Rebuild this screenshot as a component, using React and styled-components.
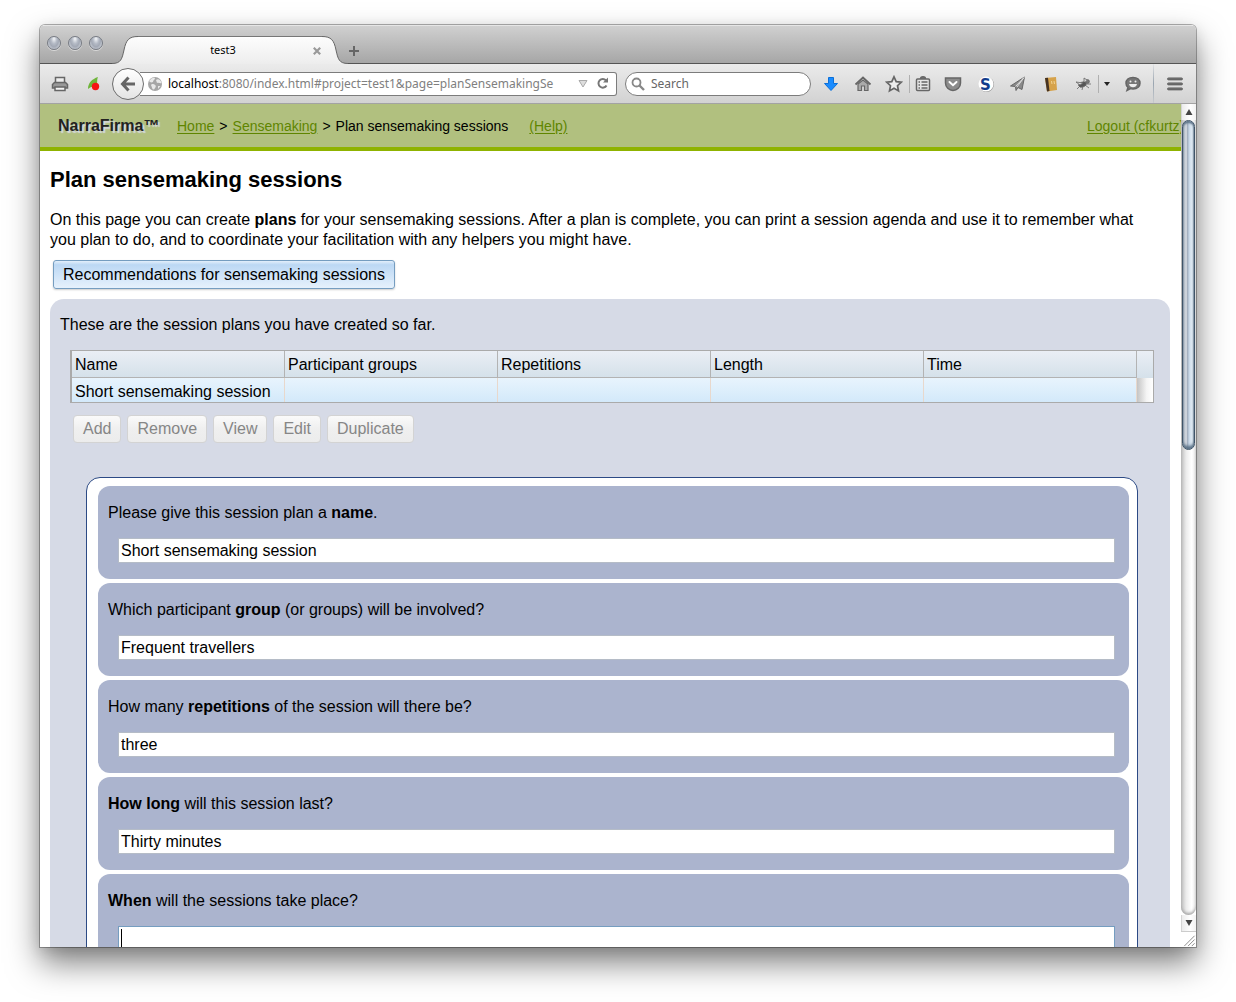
import React from "react";
import styled, { createGlobalStyle } from "styled-components";

const GlobalStyle = createGlobalStyle`
  *, *::before, *::after { box-sizing: border-box; }
  body {
    margin: 0;
    background: #fff;
    color: #000;
    font: 16px/20px "Liberation Sans", Arial, sans-serif;
    overflow: hidden;
  }
  button, input, textarea { font: inherit; color: inherit; margin: 0; }
`;

const chromeFont = `"Noto Sans", "Open Sans", sans-serif`;

const Desktop = styled.div`
  height: 100vh;
  padding: 25px 40px 55px;
`;

const BrowserWindow = styled.div`
  display: flex;
  flex-direction: column;
  height: 100%;
  border-radius: 5px 5px 0 0;
  overflow: hidden;
  background: #fff;
  box-shadow: 0 0 0 1px rgba(0, 0, 0, 0.3), 0 16px 32px rgba(0, 0, 0, 0.5),
    0 4px 14px rgba(0, 0, 0, 0.1);
`;

const TitleBar = styled.div`
  display: flex;
  align-items: flex-end;
  flex: none;
  height: 39px;
  border-top: 1px solid #e6e6e6;
  background: linear-gradient(#d0d0d0, #a5a5a5);
  box-shadow: inset 0 -1px #555;
`;

const Lights = styled.div`
  display: flex;
  align-self: flex-start;
  gap: 7px;
  width: 72px;
  padding: 10px 0 0 7px;
`;

const Light = styled.button`
  width: 14px;
  height: 14px;
  padding: 0;
  border: 1px solid #777b83;
  border-radius: 50%;
  background: radial-gradient(ellipse at 50% 15%, #f4f6f9 0, #b4bac5 35%, #a3a9b5 55%, #e2e6ec 100%);
  box-shadow: 0 1px 0 #d8d8d8;
`;

const TabEdge = styled.svg`
  display: block;
  width: 26px;
  height: 28px;
`;

const TabBody = styled.div`
  display: flex;
  align-items: center;
  width: 184px;
  height: 28px;
  border-top: 1px solid #777;
  background: linear-gradient(#fdfdfd, #ededed);
  box-shadow: inset 0 1px #fff;
`;

const TabTitle = styled.span`
  flex: 1;
  padding: 0 4px 2px 0;
  text-align: center;
  font: 11px/14px ${chromeFont};
`;

const PlainButton = styled.button`
  display: flex;
  align-items: center;
  justify-content: center;
  flex: none;
  width: ${(p) => p.$w}px;
  height: ${(p) => p.$h || 24}px;
  padding: 0;
  border: 0;
  background: none;
`;

const Toolbar = styled.div`
  display: flex;
  align-items: center;
  flex: none;
  height: 40px;
  border-bottom: 1px solid #a3a3a3;
  background: linear-gradient(#ebebeb, #d2d2d2);
`;

const Spacer = styled.span`
  flex: none;
  width: ${(p) => p.$w}px;
`;

const BackButton = styled.button`
  display: flex;
  align-items: center;
  justify-content: center;
  flex: none;
  position: relative;
  width: 32px;
  height: 32px;
  padding: 0;
  border: 1px solid #6d6d6d;
  border-radius: 50%;
  background: linear-gradient(#fff, #e4e4e4);
`;

const UrlBox = styled.div`
  display: flex;
  align-items: center;
  flex: 1;
  min-width: 0;
  height: 24px;
  margin-left: -4px;
  padding-left: 7px;
  border: 1px solid #7c7c7c;
  border-left: 0;
  border-radius: 0 3px 3px 0;
  background: #fff;
  font: 12px/16px ${chromeFont};
`;

const UrlHost = styled.label`
  padding-left: 5px;
`;

const UrlInput = styled.input`
  flex: 1;
  min-width: 0;
  height: 16px;
  padding: 0;
  border: 0;
  outline: 0;
  background: none;
  color: #808080;
`;

const SearchBox = styled.label`
  display: flex;
  align-items: center;
  gap: 6px;
  flex: none;
  width: 186px;
  height: 24px;
  margin: 0 4px 0 8px;
  padding: 0 12px 0 5px;
  border: 1px solid #7c7c7c;
  border-radius: 12px;
  background: #fff;
  font: 12px/16px ${chromeFont};
`;

const SearchInput = styled.input`
  flex: 1;
  min-width: 0;
  padding: 0;
  border: 0;
  outline: 0;
  background: none;
  &::placeholder { color: #666; opacity: 1; }
`;

const Divider = styled.span`
  flex: none;
  width: 1px;
  height: 18px;
  background: #b0b0b0;
`;

const TallDivider = styled(Divider)`
  height: 39px;
  margin: 0 0 0 2px;
  background: linear-gradient(rgba(150, 165, 180, 0.1), #9aa5b0 50%, rgba(150, 165, 180, 0.2));
`;

const Viewport = styled.div`
  display: flex;
  flex: 1;
  min-height: 0;
`;

const Page = styled.div`
  flex: 1;
  min-width: 0;
  overflow: hidden;
`;

const Header = styled.header`
  display: flex;
  align-items: center;
  height: 47px;
  padding-left: 18px;
  border-bottom: 4px solid #8fb300;
  background: #b1c07f;
  white-space: nowrap;
`;

const Brand = styled.strong`
  width: 119px;
  color: #222;
  text-shadow: 2px 2px 1px #d4d7dd;
`;

const Crumbs = styled.nav`
  display: flex;
  gap: 5px;
  flex: 1;
  font-size: 14px;
`;

const GreenLink = styled.a`
  color: #5f8500;
  text-decoration: underline;
  text-underline-offset: 2px;
`;

const HelpLink = styled(GreenLink)`
  margin-left: 16px;
`;

const Logout = styled.div`
  width: 94px;
  font-size: 14px;
`;

const Main = styled.main`
  padding: 16px 11px 0 10px;
`;

const Title = styled.h1`
  margin: 0 0 17px;
  font-size: 22px;
  line-height: 26px;
`;

const Intro = styled.p`
  margin: 0 0 10px;
  padding-right: 20px;
`;

const PrimaryButton = styled.button`
  height: 29px;
  margin-left: 3px;
  padding: 0 9px;
  border: 1px solid #759dc0;
  border-radius: 3px;
  background: linear-gradient(#e3effb 0, #bcd8f4 14%, #e6f1fc 100%);
  box-shadow: 0 1px 2px rgba(0, 0, 0, 0.2);
`;

const Panel = styled.section`
  margin-top: 10px;
  padding: 16px 16px 0 10px;
  border-radius: 14px;
  background: #d6dae6;
`;

const PanelText = styled.p`
  margin: 0;
`;

const Grid = styled.table`
  width: calc(100% - 10px);
  margin: 15px 0 12px 10px;
  border: 1px solid #aaa;
  border-left-width: 2px;
  border-spacing: 0;
  table-layout: fixed;
  text-align: left;
`;

const GutterCol = styled.col`
  width: 16px;
`;

const HeadCell = styled.th`
  height: 27px;
  padding: 2px 3px 0;
  border-right: 1px solid #b3b3b3;
  border-bottom: 1px solid #b3b3b3;
  background: linear-gradient(#eaeef5, #d5e1ea);
  font-weight: normal;
  &:last-child { border-right: 0; border-bottom: 0; }
`;

const Cell = styled.td`
  height: 24px;
  padding: 4px 3px 0;
  border-right: 1px solid #e8d8cc;
  background: linear-gradient(#e8f4fd, #d3e9fa);
  white-space: nowrap;
  &:last-child {
    border-right: 0;
    background: linear-gradient(90deg, #c4c4c4, #f4f4f4 60%, #fff);
  }
`;

const Actions = styled.div`
  display: flex;
  gap: 6px;
  padding-left: 13px;
`;

const ActionButton = styled.button`
  height: 28px;
  padding: 0 9px;
  border: 1px solid #d3d3d3;
  border-radius: 4px;
  background: linear-gradient(#fafafa, #efefef 50%, #ececec);
  color: #868686;
`;

const Form = styled.form`
  display: grid;
  gap: 4px;
  margin: 34px 16px 0 26px;
  padding: 8px 8px 8px 11px;
  border: 1px solid #2c4a85;
  border-radius: 14px;
  background: #fff;
`;

const Question = styled.div`
  display: grid;
  gap: 15px;
  padding: 17px 14px 16px 10px;
  border-radius: 12px;
  background: #abb4ce;
`;

const Answer = styled.input`
  height: 25px;
  margin-left: 10px;
  padding: 0 2px;
  border: 1px solid #b5bcc7;
  border-radius: 0;
  outline: 0;
  background: #fff;
`;

const ActiveAnswer = styled(Answer)`
  border-color: #759dc0;
  background: linear-gradient(#000, #000) 2px 2px / 1px 20px no-repeat #fff;
`;

const ScrollColumn = styled.div`
  display: flex;
  flex-direction: column;
  flex: none;
  width: 15px;
  background: #fff;
`;

const ScrollButton = styled.button`
  flex: none;
  height: 16px;
  padding: 0;
  border: 0;
  border-left: 1px solid #d5d5d5;
  background: linear-gradient(90deg, #ececec, #fff 60%, #f2f2f2);
  line-height: 0;
`;

const Track = styled.div`
  flex: 1;
  padding: 0 1px;
  border-radius: 0 0 8px 8px;
  background: linear-gradient(90deg, #c0c0c0, #ececec 35%, #fff 70%, #efefef);
  box-shadow: inset 0 -2px 3px #aaa;
`;

const Thumb = styled.div`
  height: 41.5%;
  border: 1px solid #3f5468;
  border-radius: 7px;
  background: linear-gradient(90deg, #c9ced6 0, #d4d9e0 30%, #a0adbd 42%, #c6d6e6 55%, #e8f2fa 85%, #a8b4c0 100%);
  box-shadow: inset 0 -3px 3px #5c7388, inset 0 2px 2px #5c7388;
`;

const Resize = styled.svg`
  display: block;
  flex: none;
  width: 15px;
  height: 16px;
  border-top: 1px solid #ccc;
`;

const Icon = ({ children, size = 18 }) => (
  <svg width={size} height={size} viewBox="0 0 18 18" fill="none" stroke="#666" strokeWidth="1.5" aria-hidden="true">
    {children}
  </svg>
);

const Tool = ({ label, w, children }) => (
  <PlainButton $w={w} aria-label={label}>{children}</PlainButton>
);

const columns = ["Name", "Participant groups", "Repetitions", "Length", "Time"];
const actions = ["Add", "Remove", "View", "Edit", "Duplicate"];
const questions = [
  { id: "name", label: <>Please give this session plan a <b>name</b>.</>, value: "Short sensemaking session" },
  { id: "groups", label: <>Which participant <b>group</b> (or groups) will be involved?</>, value: "Frequent travellers" },
  { id: "repetitions", label: <>How many <b>repetitions</b> of the session will there be?</>, value: "three" },
  { id: "length", label: <><b>How long</b> will this session last?</>, value: "Thirty minutes" },
  { id: "time", label: <><b>When</b> will the sessions take place?</>, value: "", active: true },
];

function Tabs() {
  return (
    <TitleBar>
      <Lights>
        <Light aria-label="Close" />
        <Light aria-label="Minimize" />
        <Light aria-label="Zoom" />
      </Lights>
      <TabEdge viewBox="0 0 26 28" aria-hidden="true">
        <defs>
          <linearGradient id="tabFill" x2="0" y2="1">
            <stop stopColor="#fdfdfd" />
            <stop offset="1" stopColor="#ededed" />
          </linearGradient>
        </defs>
        <path d="M0 27.5C9 27.5 10 23 12 14C14 4 17 .5 26 .5V28H0Z" fill="url(#tabFill)" />
        <path d="M0 27.5C9 27.5 10 23 12 14C14 4 17 .5 26 .5" fill="none" stroke="#666" />
      </TabEdge>
      <TabBody>
        <TabTitle>test3</TabTitle>
        <PlainButton $w={10} $h={14} aria-label="Close tab">
          <svg width="8" height="8" viewBox="0 0 8 8" stroke="#999" strokeWidth="2.2"><path d="M.8 .8L7.2 7.2M7.2 .8L.8 7.2" /></svg>
        </PlainButton>
      </TabBody>
      <TabEdge viewBox="0 0 26 28" aria-hidden="true">
        <path d="M26 27.5C17 27.5 16 23 14 14C12 4 9 .5 0 .5V28H26Z" fill="url(#tabFill)" />
        <path d="M26 27.5C17 27.5 16 23 14 14C12 4 9 .5 0 .5" fill="none" stroke="#666" />
      </TabEdge>
      <PlainButton $w={12} $h={26} aria-label="New tab">
        <svg width="12" height="12" viewBox="0 0 12 12" stroke="#666" strokeWidth="2"><path d="M6 1V11M1 6H11" /></svg>
      </PlainButton>
    </TitleBar>
  );
}

function Tools() {
  return (
    <Toolbar>
      <Spacer $w={4} />
      <Tool label="Print" w={32}>
        <Icon>
          <path d="M4.5 8V2.5H13.500V8" fill="#eee" />
          <path d="M1.500 13V9.500L3.500 7.500H14.500L16.500 9.500V13Z" fill="#999" />
          <path d="M4 12H14V15.500H4Z" fill="#f4f4f4" />
        </Icon>
      </Tool>
      <Tool label="Add-on" w={36}>
        <svg width="14" height="16" viewBox="0 0 14 16">
          <path d="M1 13C1 7 5 3 11 1C9 5 12 9 7 11C4 10 3 12 1 13Z" fill="#6fb53a" />
          <circle cx="8.500" cy="10.500" r="3.700" fill="#f51414" />
        </svg>
      </Tool>
      <BackButton aria-label="Back">
        <svg width="16" height="16" viewBox="0 0 16 16" fill="none" stroke="#666" strokeWidth="3"><path d="M8.500 1.500L2.500 8L8.500 14.500M3 8H15" /></svg>
      </BackButton>
      <UrlBox>
        <svg width="16" height="16" viewBox="0 0 16 16" aria-hidden="true">
          <circle cx="8" cy="8" r="7" fill="#a6a6a6" />
          <path d="M2 5C4 2 7 1 8 2C8 4 6 4 6 6C4 7 3 6 2 5ZM9 4C11 2 14 4 14.500 7C13 8 12 6 10 7ZM5 8C8 8 10 10 8 12C7 14 6 14 5 12C5 10 3 9 5 8ZM11 10L13.500 10L11 13Z" fill="#e8e8e8" />
        </svg>
        <UrlHost htmlFor="address">localhost</UrlHost>
        <UrlInput id="address" defaultValue=":8080/index.html#project=test1&page=planSensemakingSe" />
        <Tool label="Show history" w={18}>
          <svg width="10" height="8" viewBox="0 0 10 8"><path d="M1 .5H9L5 7Z" fill="#ddd" stroke="#aaa" /></svg>
        </Tool>
        <Tool label="Reload" w={20}>
          <svg width="13" height="13" viewBox="0 0 13 13" fill="none" stroke="#777" strokeWidth="2"><path d="M10 3.500A4.300 4.300 0 1 0 10.500 8.500" /><path d="M7 5.500H12V.5Z" fill="#777" stroke="none" /></svg>
        </Tool>
        <Spacer $w={4} />
      </UrlBox>
      <SearchBox>
        <svg width="14" height="14" viewBox="0 0 14 14" fill="none" stroke="#888" aria-hidden="true"><circle cx="5.500" cy="5.500" r="4" strokeWidth="1.800" /><path d="M8.500 8.500L13 13" strokeWidth="2.400" /></svg>
        <SearchInput placeholder="Search" aria-label="Search" />
      </SearchBox>
      <Tool label="Downloads" w={32}>
        <svg width="16" height="16" viewBox="0 0 16 16"><path d="M5.500 1.500H10.500V7.500H14.500L8 14.500L1.500 7.500H5.500Z" fill="#1a8cff" stroke="#0b6fd8" /></svg>
      </Tool>
      <Tool label="Home" w={32}>
        <Icon>
          <path d="M4 9V15.500H7.500V11H10.500V15.500H14V9L9 5Z" fill="#aaa" strokeWidth="1.200" />
          <path d="M1.500 9.500L9 2.500L16.500 9.500" strokeWidth="1.800" />
        </Icon>
      </Tool>
      <Tool label="Bookmark" w={30}>
        <Icon><path d="M9 1.800L11.200 6.600L16.300 7.200L12.500 10.700L13.500 15.900L9 13.300L4.500 15.900L5.500 10.700L1.700 7.200L6.800 6.600Z" fill="#eee" strokeWidth="1.700" /></Icon>
      </Tool>
      <Divider />
      <Tool label="Bookmarks list" w={26}>
        <Icon>
          <path d="M6.500 4C6.500 1 11.500 1 11.500 4" fill="#777" />
          <rect x="2.500" y="4" width="13" height="11.500" rx="1" fill="#e6e6e6" />
          <path d="M4.500 7H6M4.500 10H6M4.500 13H6M7.500 7H13.500M7.500 10H13.500M7.500 13H13.500" />
        </Icon>
      </Tool>
      <Tool label="Pocket" w={34}>
        <Icon>
          <path d="M1.500 3H16.500V8C16.500 12 13 15.500 9 15.500S1.500 12 1.500 8Z" fill="#8c8c8c" />
          <path d="M5.500 7L9 10.200L12.500 7" stroke="#fff" strokeWidth="2" strokeLinecap="round" />
        </Icon>
      </Tool>
      <Tool label="S add-on" w={32}>
        <svg width="18" height="18" viewBox="0 0 18 18">
          <circle cx="9.500" cy="9.500" r="7.500" fill="#999" />
          <circle cx="9" cy="9" r="7.500" fill="#fff" />
          <text x="8.500" y="14.500" textAnchor="middle" fontFamily="DejaVu Sans" fontWeight="bold" fontSize="15" fill="#123c8c">S</text>
        </svg>
      </Tool>
      <Tool label="Share page" w={32}>
        <Icon>
          <path d="M1.500 11L15.500 2L13 14.500L9 12.500L7 15.500L6.500 11.500Z" fill="#8a8a8a" strokeWidth="1" />
          <path d="M6.500 11.500L15 2.500L8 12" stroke="#ddd" strokeWidth="1" />
        </Icon>
      </Tool>
      <Tool label="Notebook" w={34}>
        <svg width="14" height="16" viewBox="0 0 14 16">
          <path d="M1 2L12 1L13 14L3 15.500Z" fill="#d6a24a" />
          <path d="M1 2L4 1.700L5.500 15L3 15.500Z" fill="#463322" />
          <path d="M7.500 5L8 8M10 5L10.500 8" stroke="#f2d493" />
        </svg>
      </Tool>
      <Tool label="Fly add-on" w={30}>
        <svg width="17" height="14" viewBox="0 0 17 14" fill="none" stroke="#666" strokeWidth=".8">
          <ellipse cx="7.500" cy="7.500" rx="4" ry="2.400" fill="#555" transform="rotate(-20 7.500 7.500)" />
          <circle cx="12.500" cy="4.500" r="1.900" fill="#777" />
          <path d="M8 6L1 5L5 8ZM9 5L9 1L12 3M5 9L2 12M8 9L7 13M10 8L14 11M12 7L16 7" fill="#ddd" />
        </svg>
      </Tool>
      <Divider />
      <Tool label="Add-on menu" w={16}>
        <svg width="6" height="4" viewBox="0 0 6 4"><path d="M0 0H6L3 4Z" fill="#222" /></svg>
      </Tool>
      <Tool label="Chat" w={36}>
        <Icon>
          <path d="M9 2.500C13.500 2.500 16 5 16 8.200S13.500 14 9 14C8 14 7 13.800 6.500 13.600L3 15.500L4 12.500C2.600 11.500 2 10 2 8.200C2 5 4.500 2.500 9 2.500Z" fill="#777" />
          <circle cx="6.500" cy="6.500" r="1" fill="#eee" stroke="none" />
          <circle cx="11.500" cy="6.500" r="1" fill="#eee" stroke="none" />
          <path d="M5 9H13C12.500 11.500 11 12.200 9 12.200S5.500 11.500 5 9Z" fill="#eee" stroke="none" />
        </Icon>
      </Tool>
      <TallDivider />
      <Tool label="Menu" w={42}>
        <svg width="16" height="14" viewBox="0 0 16 14" fill="#777" stroke="#555" strokeWidth=".8">
          <rect x=".5" y=".9" width="15" height="2" rx="1" />
          <rect x=".5" y="5.900" width="15" height="2" rx="1" />
          <rect x=".5" y="10.900" width="15" height="2" rx="1" />
        </svg>
      </Tool>
    </Toolbar>
  );
}

export default function App() {
  return (
    <Desktop>
      <GlobalStyle />
      <BrowserWindow>
        <Tabs />
        <Tools />
        <Viewport>
          <Page>
            <Header>
              <Brand>NarraFirma™</Brand>
              <Crumbs>
                <GreenLink href="#home">Home</GreenLink>
                <span>&gt;</span>
                <GreenLink href="#sensemaking">Sensemaking</GreenLink>
                <span>&gt;</span>
                <span>Plan sensemaking sessions</span>
                <HelpLink href="#help">(Help)</HelpLink>
              </Crumbs>
              <Logout><GreenLink href="#logout">Logout (cfkurtz)</GreenLink></Logout>
            </Header>
            <Main>
              <Title>Plan sensemaking sessions</Title>
              <Intro>
                On this page you can create <b>plans</b> for your sensemaking sessions. After a plan is complete, you can
                print a session agenda and use it to remember what you plan to do, and to coordinate your facilitation
                with any helpers you might have.
              </Intro>
              <PrimaryButton>Recommendations for sensemaking sessions</PrimaryButton>
              <Panel>
                <PanelText>These are the session plans you have created so far.</PanelText>
                <Grid>
                  <colgroup>
                    {columns.map((c) => <col key={c} />)}
                    <GutterCol />
                  </colgroup>
                  <thead>
                    <tr>
                      {columns.map((c) => <HeadCell key={c}>{c}</HeadCell>)}
                      <HeadCell as="td" />
                    </tr>
                  </thead>
                  <tbody>
                    <tr>
                      <Cell>Short sensemaking session</Cell>
                      <Cell /><Cell /><Cell /><Cell /><Cell />
                    </tr>
                  </tbody>
                </Grid>
                <Actions>
                  {actions.map((a) => <ActionButton key={a} disabled>{a}</ActionButton>)}
                </Actions>
                <Form>
                  {questions.map(({ id, label, value, active }) => (
                    <Question key={id}>
                      <label htmlFor={id}>{label}</label>
                      <Answer as={active ? ActiveAnswer : undefined} id={id} defaultValue={value} />
                    </Question>
                  ))}
                </Form>
              </Panel>
            </Main>
          </Page>
          <ScrollColumn>
            <ScrollButton aria-label="Scroll up">
              <svg width="8" height="6" viewBox="0 0 8 6"><path d="M4 0L7.500 6H.5Z" fill="#444" /></svg>
            </ScrollButton>
            <Track><Thumb /></Track>
            <ScrollButton aria-label="Scroll down">
              <svg width="8" height="6" viewBox="0 0 8 6"><path d="M4 6L7.500 0H.5Z" fill="#444" /></svg>
            </ScrollButton>
            <Resize viewBox="0 0 15 16" stroke="#888" aria-hidden="true">
              <path d="M3 15L14 4M7 15L14 8M11 15L14 12" />
            </Resize>
          </ScrollColumn>
        </Viewport>
      </BrowserWindow>
    </Desktop>
  );
}
